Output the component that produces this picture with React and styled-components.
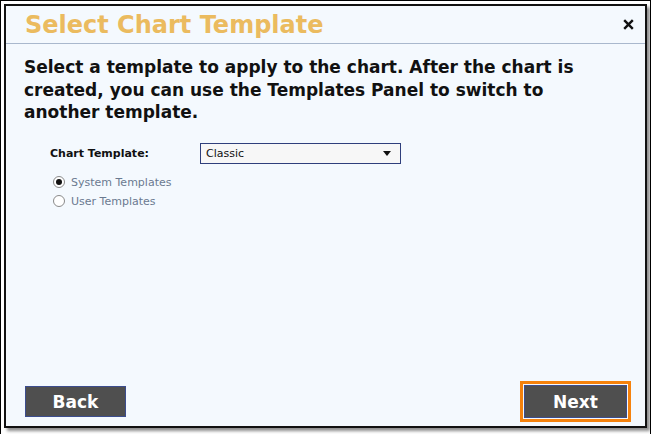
import React from "react";
import styled, { createGlobalStyle } from "styled-components";

const Global = createGlobalStyle`
  html, body { margin: 0; padding: 0; background: #ffffff; }
  body { font-family: "DejaVu Sans", Verdana, sans-serif; }
  * { box-sizing: border-box; }
`;

const Page = styled.div`
  width: 651px;
  height: 434px;
  border-left: 1px solid #000;
  border-top: 1px solid #000;
  border-right: 1px solid #000;
  padding: 3px 0 0 3px;
`;

const Dialog = styled.div`
  width: 643px;
  height: 424px;
  border: 2px solid #111;
  background: #f4f9fe;
  box-shadow: 3px 3px 3px rgba(0, 0, 0, 0.45);
  display: flex;
  flex-direction: column;
`;

const Header = styled.div`
  height: 38px;
  flex: none;
  border-bottom: 1px solid #a9b8cd;
  display: flex;
  align-items: center;
  justify-content: space-between;
  padding: 0 10px 0 19px;
`;

const Title = styled.h1`
  margin: 0;
  font-family: "DejaVu Sans", Verdana, sans-serif;
  font-weight: bold;
  font-size: 24px;
  color: #ebbb5f;
`;

const Close = styled.button`
  border: 0;
  background: transparent;
  padding: 0;
  width: 14px;
  height: 14px;
  display: flex;
  align-items: center;
  justify-content: center;
  cursor: pointer;
`;

const Body = styled.div`
  flex: 1;
  padding: 12px 20px 0 18px;
`;

const Intro = styled.p`
  margin: 0;
  max-width: 560px;
  font-weight: bold;
  font-size: 17px;
  line-height: 22.5px;
  color: #111;
`;

const FieldRow = styled.div`
  display: flex;
  align-items: center;
  margin-top: 19px;
  padding-left: 26px;
`;

const Label = styled.label`
  width: 150px;
  font-size: 11px;
  font-weight: bold;
  color: #111;
`;

const Select = styled.div`
  width: 201px;
  height: 21px;
  border: 1px solid #2f3f7c;
  background: #f7f7f7;
  display: flex;
  align-items: center;
  justify-content: space-between;
  padding: 0 9px 0 5px;
  font-size: 11px;
  color: #111;
`;

const RadioGroup = styled.div`
  display: flex;
  flex-direction: column;
  gap: 6px;
  margin-top: 12px;
  padding-left: 29px;
`;

const RadioRow = styled.div`
  display: flex;
  align-items: center;
  gap: 6px;
  font-size: 11px;
  color: #6b7a90;
  height: 13px;
`;

const RadioCircle = styled.span`
  width: 12px;
  height: 12px;
  border-radius: 50%;
  border: 1px solid #8a8a8a;
  background: #fff;
  display: flex;
  align-items: center;
  justify-content: center;
  &::after {
    content: "";
    width: 6px;
    height: 6px;
    border-radius: 50%;
    background: ${(p) => (p.$checked ? "#111" : "transparent")};
  }
`;

const Footer = styled.div`
  flex: none;
  display: flex;
  align-items: center;
  justify-content: space-between;
  padding: 0 14px 3px 19px;
  height: 46px;
`;

const Button = styled.button`
  width: ${(p) => p.$w}px;
  height: ${(p) => p.$h}px;
  background: #4f4f4f;
  border: 1px solid #3c4d8e;
  color: #fff;
  font-family: "DejaVu Sans", Verdana, sans-serif;
  font-weight: bold;
  font-size: 17px;
  padding: 0;
  cursor: pointer;
`;

const Focus = styled.div`
  border: 3px solid #f5820d;
  padding: 1px;
  background: #f4f9fe;
  display: flex;
`;

export default function App() {
  return (
    <>
      <Global />
      <Page>
        <Dialog>
          <Header>
            <Title>Select Chart Template</Title>
            <Close aria-label="Close">
              <svg width="11" height="11" viewBox="0 0 11 11">
                <path d="M1.2 1.2 L9.8 9.8 M9.8 1.2 L1.2 9.8" stroke="#111" strokeWidth="2.4" strokeLinecap="butt" />
              </svg>
            </Close>
          </Header>
          <Body>
            <Intro>
              Select a template to apply to the chart. After the chart is created, you can use the Templates Panel to switch to another template.
            </Intro>
            <FieldRow>
              <Label>Chart Template:</Label>
              <Select>
                <span>Classic</span>
                <svg width="8" height="5" viewBox="0 0 8 5">
                  <path d="M0 0 H8 L4 5 Z" fill="#111" />
                </svg>
              </Select>
            </FieldRow>
            <RadioGroup>
              <RadioRow>
                <RadioCircle $checked />
                System Templates
              </RadioRow>
              <RadioRow>
                <RadioCircle />
                User Templates
              </RadioRow>
            </RadioGroup>
          </Body>
          <Footer>
            <Button $w={101} $h={31}>Back</Button>
            <Focus>
              <Button $w={103} $h={33}>Next</Button>
            </Focus>
          </Footer>
        </Dialog>
      </Page>
    </>
  );
}
